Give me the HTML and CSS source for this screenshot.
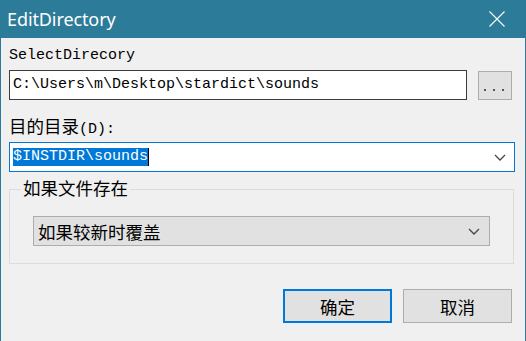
FILE: index.html
```html
<!DOCTYPE html>
<html>
<head>
<meta charset="utf-8">
<link rel="stylesheet" href="styles.css">
</head>
<body>
<div class="window">
  <div class="titlebar">
    <span class="title">EditDirectory</span>
    <svg class="close" width="16" height="16" viewBox="0 0 16 16"><path d="M0.5 0.5 L15.5 15.5 M15.5 0.5 L0.5 15.5" stroke="#fff" stroke-width="1.1" fill="none"/></svg>
  </div>
  <div class="content">
    <div class="label mono">SelectDirecory</div>
    <div class="pathrow">
      <div class="pathinput mono">C:\Users\m\Desktop\stardict\sounds</div>
      <div class="browse"><span class="dots"><i></i><i></i><i></i></span></div>
    </div>
    <div class="label2"><span class="cjk">目的目录</span><span class="mono paren">(D):</span></div>
    <div class="combo">
      <span class="sel mono">$INSTDIR\sounds</span><span class="caret"></span>
      <svg class="chev" width="12" height="7" viewBox="0 0 12 7"><path d="M1 1 L6 6 L11 1" stroke="#444" stroke-width="1.3" fill="none"/></svg>
    </div>
    <div class="group">
      <div class="legend cjk">如果文件存在</div>
      <div class="dropdown">
        <span class="cjk">如果较新时覆盖</span>
        <svg class="chev" width="12" height="7" viewBox="0 0 12 7"><path d="M1 1 L6 6 L11 1" stroke="#444" stroke-width="1.3" fill="none"/></svg>
      </div>
    </div>
    <div class="buttons">
      <div class="btn default cjk">确定</div>
      <div class="btn cjk">取消</div>
    </div>
  </div>
</div>
</body>
</html>
```
FILE: styles.css
```css
* { box-sizing: border-box; }
html, body { margin: 0; padding: 0; }
body { width: 526px; height: 341px; overflow: hidden; background: #f0f0f0; }
.window {
  width: 526px; height: 341px;
  border-left: 1px solid #2b7a98;
  border-right: 1px solid #2b7a98;
  background: #f0f0f0;
  display: flex; flex-direction: column;
}
.titlebar {
  height: 38px; background: #2c7b98; color: #fff;
  display: flex; align-items: center; justify-content: space-between;
  padding: 0 20px 0 6px;
}
.title { font-family: "Noto Sans", sans-serif; font-size: 18px; letter-spacing: -0.1px; padding-bottom: 1px; }
.close { display: block; margin-top: -1px; }
.content { padding: 7px 11px 0 8px; display: flex; flex-direction: column; }
.mono { font-family: "Liberation Mono", monospace; font-size: 15px; color: #000; }
.cjk { font-family: "Noto Sans CJK SC", sans-serif; font-size: 17.5px; color: #000; }
.label { height: 20px; line-height: 20px; margin-top: 1px; }
.pathrow { display: flex; align-items: center; margin-top: 4px; }
.pathinput {
  width: 458px; height: 30px; background: #fff;
  border: 1px solid #3c3c3c; padding-left: 3px; line-height: 28px;
}
.browse {
  width: 34px; height: 29px; margin-left: 11px; background: #e1e1e1;
  border: 1px solid #adadad; display: flex; align-items: flex-end; justify-content: center; padding-bottom: 8px;
}
.dots { display: flex; gap: 7px; margin-right: 2px; }
.dots i { display: block; width: 2px; height: 2px; background: #555; }
.label2 { margin-top: 15px; height: 22px; line-height: 22px; display: flex; align-items: baseline; }
.paren { font-size: 15px; }
.combo {
  margin-top: 5px; width: 506px; height: 30px; background: #fff;
  border: 1px solid #0078d7; position: relative; display: flex; align-items: center; padding-left: 3px;
}
.sel { background: #0078d7; color: #fff; line-height: 18px; height: 18px; }
.caret { display: inline-block; width: 1px; height: 18px; background: #000; }
.combo .chev { position: absolute; right: 8px; top: 11px; }
.group {
  margin-top: 17px; width: 505px; height: 75px; border: 1px solid #dcdcdc;
  position: relative; padding: 26px 0 0 23px;
}
.legend {
  position: absolute; left: 11px; top: -13px; background: #f0f0f0; padding: 0 2px; line-height: 22px;
}
.dropdown {
  width: 457px; height: 30px; background: #e1e1e1; border: 1px solid #adadad;
  display: flex; align-items: center; justify-content: space-between; padding: 0 9px 0 4px;
}
.buttons { display: flex; justify-content: flex-end; gap: 11px; margin-top: 25px; padding-right: 2px; }
.btn {
  width: 109px; height: 34px; background: #e1e1e1; border: 1px solid #adadad;
  display: flex; align-items: center; justify-content: center;
}
.btn.default { border: 2px solid #0078d7; }
```
